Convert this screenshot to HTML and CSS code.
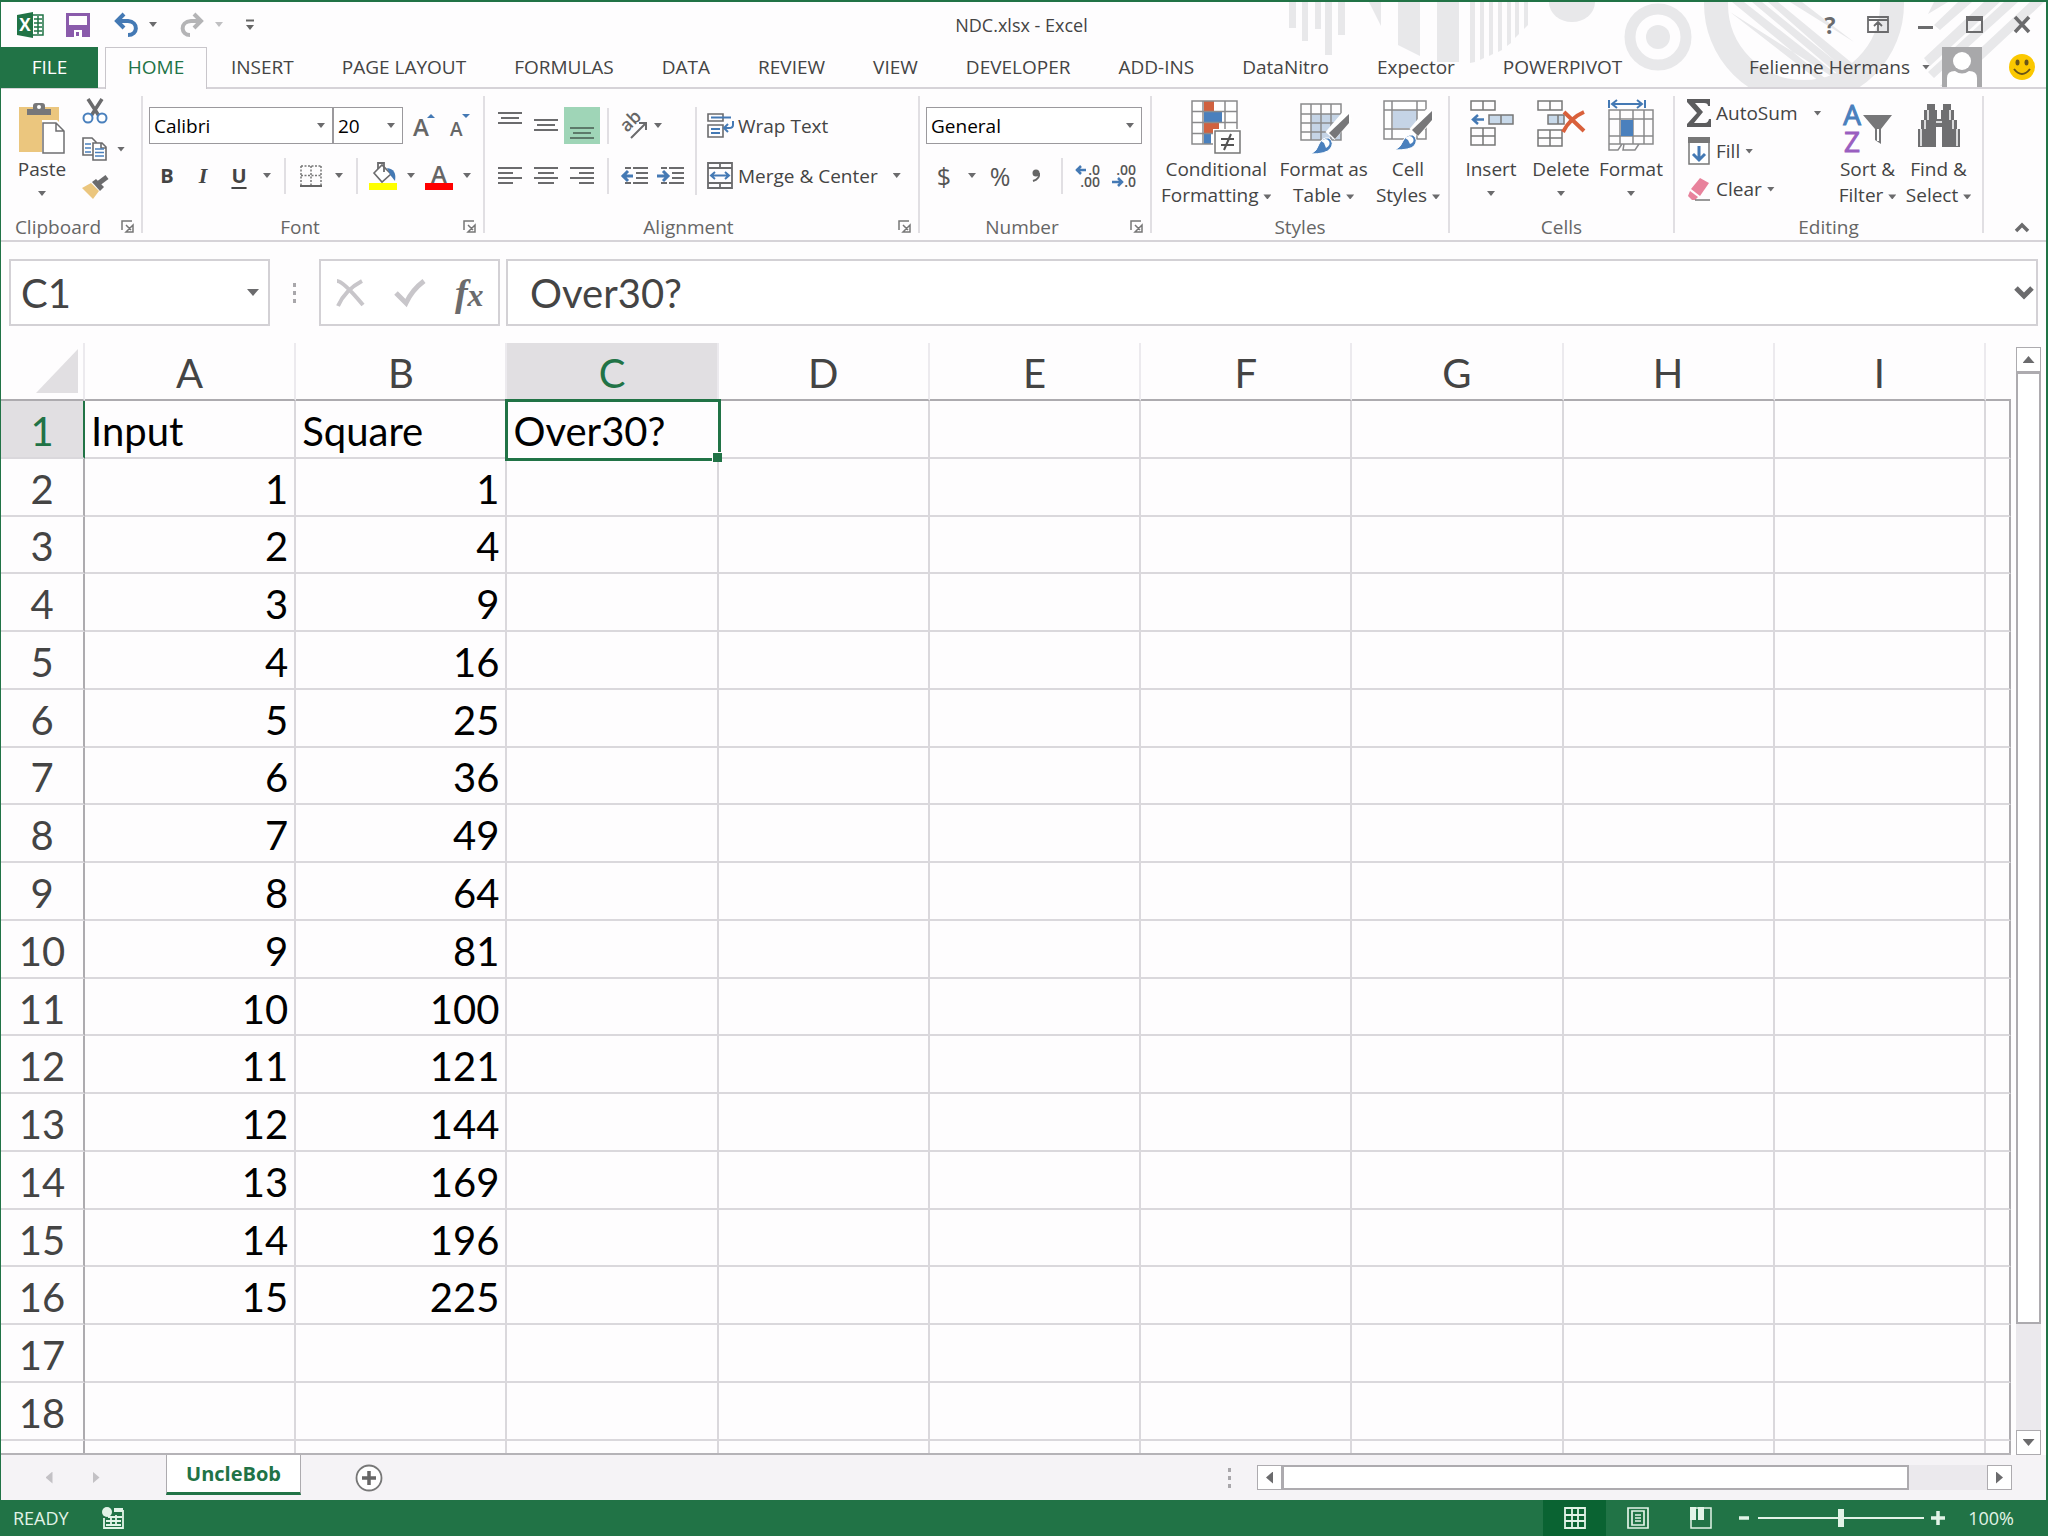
FILE: index.html
```
<!DOCTYPE html>
<html lang="en">
<head>
    <meta charset="UTF-8">
    <meta name="viewport" content="width=device-width, initial-scale=1.0">
    <title>NDC.xlsx - Excel</title>
    <link rel="stylesheet" href="styles.css">
</head>
<body>
<div class="app">
    <header class="top">
        <!-- decoration behind the window buttons -->
        <svg class="circuit" width="768" height="86" viewBox="1278 2 768 86">
            <g fill="#e8e8ea">
                <path d="M1289 2h7v26h-7zM1302 2h6v39h-6zM1315 2h6v27h-6zM1325 2h7v53h-7zM1338 2h7v33h-7zM1369 2h12v24z"/>
                <path d="M1398 2h22v54l-22-11zM1437 2h22v60h-22zM1470 2h5v60l-5 1zM1480 2h4v56l-4 2zM1489 2h4v52l-4 2zM1498 2h4v48l-4 2zM1507 2h4v41l-4 3zM1515 2h4v32l-4 4zM1524 2h4v23l-4 4z"/>
                <path d="M1549 2h46a23 20 0 0 1-46 0z"/>
                <circle cx="1658" cy="37" r="12"/>
                <path d="M1730 12l98 76h22zM1732 2h12l110 86h-17zM1752 2h10l94 76-4 8zM1768 2h10l80 66-6 8zM1790 2h12l52 40z"/>
                <path d="M1934 2h14l-20 12zM1958 2h14l-32 28-6-5zM1984 2h16l-70 64-6-8zM2004 2h14l-84 76-6-6zM2030 2h14l-90 84h-14z"/>
            </g>
            <circle cx="1658" cy="37" r="28" fill="none" stroke="#e8e8ea" stroke-width="11"/>
            <circle cx="1804" cy="4" r="88" fill="none" stroke="#e8e8ea" stroke-width="24"/>
        </svg>

        <div class="titlebar">
            <div class="quick">
                <svg class="q-excel" width="27" height="26" viewBox="0 0 27 26"><path d="M14 3h12v20H14z" fill="#fff" stroke="#217346" stroke-width="1.5"/><path d="M17 7h8M17 11h8M17 15h8M17 19h8M21 4v18" stroke="#217346" stroke-width="1.5"/><path d="M0 3l16-3v26L0 23z" fill="#217346"/><text x="8" y="19" text-anchor="middle" class="logo-x">X</text></svg>
                <button aria-label="Save"><svg width="24" height="24" viewBox="0 0 24 24"><path d="M1.500 1.500h21v21h-21z" fill="none" stroke="#8a5bab" stroke-width="3"/><path d="M2 13h20M4 14h16v8H4z" fill="#8a5bab" stroke="#8a5bab" stroke-width="2"/><path d="M8 17h8v7H8z" fill="#fff"/><path d="M10 19h3v4h-3z" fill="#8a5bab"/></svg></button>
                <button aria-label="Undo"><svg width="24" height="24" viewBox="0 0 24 24"><path d="M2 8h12c11 1 10 14 0 14M10 1L3 8l7 7" fill="none" stroke="#4479b4" stroke-width="4"/></svg></button>
                <i class="caret"></i>
                <button class="q-redo" aria-label="Redo"><svg width="24" height="24" viewBox="0 0 24 24"><path d="M22 8H11C-1 9 1 22 10 22M14 1l7 7-7 7" fill="none" stroke="#b4b4b6" stroke-width="4"/></svg></button>
                <i class="caret pale"></i>
                <button class="q-more" aria-label="Customize"><svg width="10" height="12" viewBox="0 0 10 12"><path d="M1 1.500h8" stroke="#666" stroke-width="2"/><path d="M1 6h8l-4 5z" fill="#666"/></svg></button>
            </div>
            <h1>NDC.xlsx - Excel</h1>
            <div class="window-buttons">
                <button class="help" aria-label="Help">?</button>
                <button aria-label="Ribbon options"><svg width="22" height="17" viewBox="0 0 22 17"><path d="M1 1h20v15H1zM1 4h20M11 15V7M7 10l4-4 4 4" fill="none" stroke="#6b6b6d" stroke-width="1.800"/></svg></button>
                <button aria-label="Minimize"><svg width="16" height="17" viewBox="0 0 16 17"><path d="M0 11.500h15" stroke="#6b6b6d" stroke-width="3"/></svg></button>
                <button aria-label="Maximize"><svg width="17" height="17" viewBox="0 0 17 17"><path d="M1 1h15v15H1z" fill="none" stroke="#6b6b6d" stroke-width="2"/><path d="M0 0h17v5H0z" fill="#6b6b6d"/></svg></button>
                <button aria-label="Close"><svg width="16" height="17" viewBox="0 0 16 17"><path d="M1 1l14 15M15 1L1 16" stroke="#6b6b6d" stroke-width="3.500"/></svg></button>
            </div>
        </div>

        <nav class="tabs">
            <a href="#" class="file">FILE</a>
            <a href="#" class="active">HOME</a>
            <a href="#">INSERT</a>
            <a href="#">PAGE LAYOUT</a>
            <a href="#">FORMULAS</a>
            <a href="#">DATA</a>
            <a href="#">REVIEW</a>
            <a href="#">VIEW</a>
            <a href="#">DEVELOPER</a>
            <a href="#">ADD-INS</a>
            <a href="#">DataNitro</a>
            <a href="#">Expector</a>
            <a href="#">POWERPIVOT</a>
            <button class="user">Felienne Hermans <i class="caret"></i>
                <svg width="40" height="40" viewBox="0 0 40 40"><path d="M0 0h40v40H0z" fill="#a8a8aa"/><circle cx="20" cy="14" r="9" fill="#fff"/><path d="M5 40V31q0-7 8-7q7 5 14 0q8 0 8 7v9z" fill="#fff"/></svg>
            </button>
            <button class="smile" aria-label="Send a smile"><svg width="28" height="28" viewBox="0 0 28 28"><circle cx="14" cy="14" r="13" fill="#fbc800"/><ellipse cx="9.500" cy="9.500" rx="2" ry="3" fill="#6a5518"/><ellipse cx="18.500" cy="9.500" rx="2" ry="3" fill="#6a5518"/><path d="M6 16q8 10 16 0" fill="none" stroke="#6a5518" stroke-width="2"/></svg></button>
        </nav>
    </header>

    <section class="ribbon">
        <div class="group clipboard">
            <div class="body">
                <button class="big paste">
                    <svg width="48" height="52" viewBox="0 0 48 52"><path d="M1 5h40v45H1z" fill="#ebc67e"/><path d="M9 13V7h6V4q0-3 3-3h6q3 0 3 3v3h6v6z" fill="#777779"/><circle cx="21" cy="5" r="2" fill="#fff"/><path d="M24 18h15l9 9v25H24z" fill="#fff"/><path d="M25 21h13l8 8v22H25zM38 21v8h8" fill="#fff" stroke="#6f6f71" stroke-width="1.500"/></svg>
                    <span>Paste</span><i class="caret"></i>
                </button>
                <div class="clip-tools">
                    <button aria-label="Cut"><svg width="26" height="26" viewBox="0 0 26 26"><path d="M6 1l11 17M20 1L9 18" stroke="#6b6b6d" stroke-width="3.500"/><circle cx="6" cy="20" r="4.500" fill="#fff" stroke="#4a80bd" stroke-width="2"/><circle cx="20" cy="20" r="4.500" fill="#fff" stroke="#4a80bd" stroke-width="2"/></svg></button>
                    <button aria-label="Copy"><svg width="26" height="26" viewBox="0 0 26 26"><path d="M1 2h9l4 4v13H1z" fill="#fff" stroke="#6b6b6d" stroke-width="1.600"/><path d="M3 8h6M3 12h6M3 16h6" stroke="#4a80bd" stroke-width="1.600"/><path d="M11 7h9l4 4v13H11zM19 7v5h5" fill="#fff" stroke="#6b6b6d" stroke-width="1.600"/><path d="M13 13h9M13 16.500h9M13 20h9" stroke="#4a80bd" stroke-width="1.600"/></svg></button>
                    <i class="caret"></i>
                    <button aria-label="Format Painter"><svg width="26" height="26" viewBox="0 0 26 26"><path d="M0 14l9-5 8 8-6 8z" fill="#ebc67e"/><path d="M10 8l4-3 8 8-4 4z" fill="#6b6b6d"/><path d="M17 9l8-6" stroke="#6b6b6d" stroke-width="5"/></svg></button>
                </div>
            </div>
            <div class="caption">Clipboard</div>
            <button class="launcher" aria-label="Clipboard settings"><svg width="13" height="13" viewBox="0 0 13 13"><path d="M1 10V1h10M5 5l5 5M12 5v7H5z" fill="none" stroke="#777" stroke-width="1.500"/></svg></button>
        </div>

        <div class="group font">
            <div class="body rows">
                <div class="row">
                    <span class="combo face"><select aria-label="Font"><option>Calibri</option></select><i class="caret"></i></span>
                    <span class="combo size"><select aria-label="Font size"><option>20</option></select><i class="caret"></i></span>
                    <button class="tool" aria-label="Increase font size"><svg width="24" height="26" viewBox="0 0 24 26"><text x="0" y="23" class="grow">A</text><path d="M14 5h8l-4-4z" fill="#4479b4"/></svg></button>
                    <button class="tool" aria-label="Decrease font size"><svg width="24" height="26" viewBox="0 0 24 26"><text x="1" y="23" class="shrink">A</text><path d="M13 1h8l-4 4z" fill="#4479b4"/></svg></button>
                </div>
                <div class="row">
                    <button class="tool bold">B</button>
                    <button class="tool italic">I</button>
                    <button class="tool under">U</button>
                    <button class="drop" aria-label="Underline styles"><i class="caret"></i></button>
                    <i class="sep"></i>
                    <button class="tool" aria-label="Borders"><svg width="22" height="22" viewBox="0 0 22 22"><path d="M1 1h20M1 1v19M21 1v19M11 1v19M1 10.500h20" stroke="#777" stroke-width="1.500" stroke-dasharray="2 1.500"/><path d="M0 21h22" stroke="#666" stroke-width="2"/></svg></button>
                    <button class="drop" aria-label="Border styles"><i class="caret"></i></button>
                    <i class="sep"></i>
                    <button class="tool" aria-label="Fill color"><svg width="28" height="28" viewBox="0 0 28 28"><path d="M5 11l8-8 9 9-9 8z" fill="#fff" stroke="#6b6b6d" stroke-width="1.600"/><path d="M9 7V1h6v9" fill="none" stroke="#6b6b6d" stroke-width="1.800"/><path d="M18 6q10 1 8 13l-4-5z" fill="#4479b4"/><path d="M0 21h28v7H0z" fill="#ff0"/></svg></button>
                    <button class="drop" aria-label="Fill colors"><i class="caret"></i></button>
                    <button class="tool" aria-label="Font color"><svg width="28" height="28" viewBox="0 0 28 28"><text x="14" y="21" text-anchor="middle" class="grow">A</text><path d="M0 21h28v7H0z" fill="#f00"/></svg></button>
                    <button class="drop" aria-label="Font colors"><i class="caret"></i></button>
                </div>
            </div>
            <div class="caption">Font</div>
            <button class="launcher" aria-label="Font settings"><svg width="13" height="13" viewBox="0 0 13 13"><path d="M1 10V1h10M5 5l5 5M12 5v7H5z" fill="none" stroke="#777" stroke-width="1.500"/></svg></button>
        </div>

        <div class="group align">
            <div class="body">
                <div class="rows">
                    <div class="row">
                        <button class="tool" aria-label="Top Align"><svg width="24" height="36" viewBox="0 0 24 36"><path d="M0 5h24M3 10h18M0 15h24" stroke="#6b6b6d" stroke-width="2"/></svg></button>
                        <button class="tool" aria-label="Middle Align"><svg width="24" height="36" viewBox="0 0 24 36"><path d="M0 12h24M3 17h18M0 22h24" stroke="#6b6b6d" stroke-width="2"/></svg></button>
                        <button class="tool on" aria-label="Bottom Align"><svg width="24" height="36" viewBox="0 0 24 36"><path d="M0 20h24M3 25h18M0 30h24" stroke="#5d7a6a" stroke-width="2"/></svg></button>
                        <i class="sep"></i>
                        <button class="tool" aria-label="Orientation"><svg width="28" height="28" viewBox="0 0 28 28"><text x="0" y="0" class="ab" transform="translate(7 21) rotate(-45)">ab</text><path d="M11 26L26 11M19 11h7v7" fill="none" stroke="#6b6b6d" stroke-width="2"/></svg></button>
                        <button class="drop" aria-label="Orientations"><i class="caret"></i></button>
                    </div>
                    <div class="row">
                        <button class="tool" aria-label="Align Left"><svg width="24" height="20" viewBox="0 0 24 20"><path d="M0 2h24M0 7h15M0 12h24M0 17h15" stroke="#6b6b6d" stroke-width="2"/></svg></button>
                        <button class="tool" aria-label="Center"><svg width="24" height="20" viewBox="0 0 24 20"><path d="M0 2h24M4 7h16M0 12h24M4 17h16" stroke="#6b6b6d" stroke-width="2"/></svg></button>
                        <button class="tool" aria-label="Align Right"><svg width="24" height="20" viewBox="0 0 24 20"><path d="M0 2h24M9 7h15M0 12h24M9 17h15" stroke="#6b6b6d" stroke-width="2"/></svg></button>
                        <i class="sep"></i>
                        <button class="tool" aria-label="Decrease Indent"><svg width="27" height="20" viewBox="0 0 27 20"><path d="M4 2h6M12 2h15M15 7h12M15 12h12M4 17h6M12 17h15" stroke="#6b6b6d" stroke-width="2"/><path d="M1 10h11M7 5l-5 5 5 5" fill="none" stroke="#4479b4" stroke-width="3"/></svg></button>
                        <button class="tool" aria-label="Increase Indent"><svg width="27" height="20" viewBox="0 0 27 20"><path d="M4 2h6M12 2h15M15 7h12M15 12h12M4 17h6M12 17h15" stroke="#6b6b6d" stroke-width="2"/><path d="M0 10h11M6 5l5 5-5 5" fill="none" stroke="#4479b4" stroke-width="3"/></svg></button>
                    </div>
                </div>
                <i class="sep tall"></i>
                <div class="rows">
                    <button class="wide"><svg width="27" height="27" viewBox="0 0 27 27"><path d="M1 2h15v7H1zM1 13h15v12H1z" fill="none" stroke="#6b6b6d" stroke-width="1.600"/><path d="M4 5.500h20M4 17h9M4 21h9M26 9v4q0 3-4 3h-5M21 12l-4 4 4 4" fill="none" stroke="#4479b4" stroke-width="2"/></svg>Wrap Text</button>
                    <button class="wide"><svg width="27" height="27" viewBox="0 0 27 27"><path d="M1 1h24v25H1zM1 6h24M1 21h24M13 1v5M13 21v5" fill="none" stroke="#6b6b6d" stroke-width="1.800"/><path d="M4 13.500h18M8 10l-4 3.500 4 3.500M18 10l4 3.500-4 3.500" fill="none" stroke="#4479b4" stroke-width="2"/></svg>Merge &amp; Center <i class="caret far"></i></button>
                </div>
            </div>
            <div class="caption">Alignment</div>
            <button class="launcher" aria-label="Alignment settings"><svg width="13" height="13" viewBox="0 0 13 13"><path d="M1 10V1h10M5 5l5 5M12 5v7H5z" fill="none" stroke="#777" stroke-width="1.500"/></svg></button>
        </div>

        <div class="group number">
            <div class="body rows">
                <div class="row">
                    <span class="combo format"><select aria-label="Number format"><option>General</option></select><i class="caret"></i></span>
                </div>
                <div class="row">
                    <button class="tool sign">$</button>
                    <button class="drop" aria-label="Currencies"><i class="caret"></i></button>
                    <button class="tool sign">%</button>
                    <button class="tool" aria-label="Comma Style"><svg width="10" height="14" viewBox="0 0 10 14"><circle cx="5" cy="4" r="3.500" fill="#666"/><path d="M8 4q1 6-6 8" fill="none" stroke="#666" stroke-width="2"/></svg></button>
                    <i class="sep"></i>
                    <button class="tool" aria-label="Increase Decimal"><svg width="26" height="26" viewBox="0 0 26 26"><text x="25" y="12" text-anchor="end" class="dec">.0</text><text x="25" y="24" text-anchor="end" class="dec">.00</text><path d="M1 7h10M6 3L2 7l4 4" fill="none" stroke="#4479b4" stroke-width="2.500"/></svg></button>
                    <button class="tool" aria-label="Decrease Decimal"><svg width="26" height="26" viewBox="0 0 26 26"><text x="25" y="12" text-anchor="end" class="dec">.00</text><text x="25" y="24" text-anchor="end" class="dec">.0</text><path d="M1 19h10M7 15l4 4-4 4" fill="none" stroke="#4479b4" stroke-width="2.500"/></svg></button>
                </div>
            </div>
            <div class="caption">Number</div>
            <button class="launcher" aria-label="Number settings"><svg width="13" height="13" viewBox="0 0 13 13"><path d="M1 10V1h10M5 5l5 5M12 5v7H5z" fill="none" stroke="#777" stroke-width="1.500"/></svg></button>
        </div>

        <div class="group styles">
            <div class="body">
                <button class="big">
                    <svg width="50" height="54" viewBox="0 0 50 54"><path d="M1 1h45v43H1z" fill="#fff"/><path d="M13 1h10v10H13zM13 23h15v10H13z" fill="#d0613f"/><path d="M13 12h18v10H13zM13 34h7v10h-7z" fill="#4a80bd"/><path d="M1 1h45v43H1zM12 1v43M34 1v43M1 11.500h45M1 22.500h45M1 33.500h45" fill="none" stroke="#8a8a8c" stroke-width="1.500"/><path d="M22 29h28v25H22z" fill="#fff"/><path d="M24 31h25v22H24z" fill="#fff" stroke="#777" stroke-width="1.500"/><path d="M30 39h13M30 45h13M40 34l-7 16" stroke="#555" stroke-width="2"/></svg>
                    <span>Conditional<br>Formatting <i class="caret"></i></span>
                </button>
                <button class="big">
                    <svg width="50" height="54" viewBox="0 0 50 54"><path d="M12 14h30v26H12z" fill="#c5d4e6"/><path d="M2 4h40v36H2zM12 4v36M22 4v36M32 4v36M2 14h40M2 23h40M2 32h40" fill="none" stroke="#8a8a8c" stroke-width="1.500"/><path d="M49 15L31 36" stroke="#fff" stroke-width="12"/><path d="M50 14v9L36 39l-6-6z" fill="#777779"/><path d="M12 54q6-3 8-10 3-7 10-6 6 5 1 11-4 5-19 5z" fill="#4a80bd" stroke="#fff"/><path d="M22 41q5-4 8 0 2 4-3 7l-2-5z" fill="#fff"/></svg>
                    <span>Format as<br>Table <i class="caret"></i></span>
                </button>
                <button class="big">
                    <svg width="50" height="54" viewBox="0 0 50 54"><path d="M1 1h42v38H1z" fill="#fff"/><path d="M10 10h24v18H10z" fill="#c5d4e6"/><path d="M1 1h42v38H1zM9 1v38M34 1v38M1 10h42M1 29h42" fill="none" stroke="#8a8a8c" stroke-width="1.500"/><path d="M48 13L31 33" stroke="#fff" stroke-width="12"/><path d="M49 11v9L35 36l-6-6z" fill="#777779"/><path d="M12 50q6-3 8-9 3-7 10-6 6 5 1 11-4 4-19 4z" fill="#4a80bd" stroke="#fff"/><path d="M22 38q5-4 8 0 2 4-3 6l-2-4z" fill="#fff"/></svg>
                    <span>Cell<br>Styles <i class="caret"></i></span>
                </button>
            </div>
            <div class="caption">Styles</div>
        </div>

        <div class="group cells">
            <div class="body">
                <button class="big">
                    <svg width="48" height="54" viewBox="0 0 48 54"><path d="M4 1h24v9H4zM16 1v9M4 28h24v17H4zM16 28v17M4 36h24" fill="none" stroke="#777" stroke-width="1.500"/><path d="M22 15h24v9H22zM34 15v9" fill="#c8d9ea" stroke="#777" stroke-width="1.500"/><path d="M6 19.500h11M11 15l-5 4.500 5 4.500" fill="none" stroke="#4479b4" stroke-width="2.500"/></svg>
                    <span>Insert</span><i class="caret"></i>
                </button>
                <button class="big">
                    <svg width="50" height="54" viewBox="0 0 50 54"><path d="M2 1h24v9H2zM14 1v9M2 30h24v16H2zM14 30v16M2 38h24" fill="none" stroke="#777" stroke-width="1.500"/><path d="M12 15h16v9H12zM22 15v9" fill="#c8d9ea" stroke="#777" stroke-width="1.500"/><path d="M28 12l20 19M48 12Q34 18 27 32" fill="none" stroke="#d9603b" stroke-width="4"/></svg>
                    <span>Delete</span><i class="caret"></i>
                </button>
                <button class="big">
                    <svg width="48" height="54" viewBox="0 0 48 54"><path d="M2 0v8M38 0v8M6 4h28M10 0L5 4l5 4M30 0l5 4-5 4" fill="none" stroke="#4479b4" stroke-width="2"/><path d="M2 10h44v34H2zM13 10v34M26 10v34M37 10v34M2 19h44M2 36h44M2 44v6h9l4-6M17 44l-1 6h12l4-6" fill="none" stroke="#8a8a8c" stroke-width="1.500"/><path d="M14 20h12v16H14z" fill="#4a80bd"/></svg>
                    <span>Format</span><i class="caret"></i>
                </button>
            </div>
            <div class="caption">Cells</div>
        </div>

        <div class="group editing">
            <div class="body">
                <div class="edit-list">
                    <button class="wide"><svg width="24" height="28" viewBox="0 0 24 28"><path d="M0 0h23v7h-2q0-3-4-3H8l8 9-9 11h11q3 0 4-4h2v8H0v-3l10-11L0 3z" fill="#5c5c5e"/></svg>AutoSum <i class="caret far"></i></button>
                    <button class="wide"><svg width="24" height="30" viewBox="0 0 24 30"><path d="M2 2h20v26H2z" fill="#fff" stroke="#777" stroke-width="1.500"/><path d="M1 1h22v6H1z" fill="#777"/><path d="M12 10v14M6 18l6 6 6-6" fill="none" stroke="#4479b4" stroke-width="3"/></svg>Fill <i class="caret"></i></button>
                    <button class="wide"><svg width="24" height="26" viewBox="0 0 24 26"><path d="M13 2l9 5-9 13-9-7z" fill="#e8829c"/><path d="M3 15l8 6-3 3H5l-4-4z" fill="#e8829c"/><path d="M8 24h15" stroke="#777" stroke-width="1.500"/></svg>Clear <i class="caret"></i></button>
                </div>
                <button class="big">
                    <svg width="48" height="54" viewBox="0 0 48 54"><text x="8" y="25" text-anchor="middle" class="sort-a">A</text><text x="8" y="52" text-anchor="middle" class="sort-z">Z</text><path d="M19 15h29L37 29v15l-6-4V29z" fill="#777779"/><path d="M34 29v12" stroke="#fff" stroke-width="2"/></svg>
                    <span>Sort &amp;<br>Filter <i class="caret"></i></span>
                </button>
                <button class="big">
                    <svg width="46" height="54" viewBox="0 0 46 54"><path d="M11 4h8v6h2v9h4v-9h2V4h8v6h3v10h3v9h3v18H26V27h-6v20H2V29h3V20h3V10h3z" fill="#6f6f71"/><path d="M5 29v17M9 20v9M12 10v10M41 29v17M37 20v9M34 10v10M20 22h6" stroke="#fff" stroke-width="1.500"/></svg>
                    <span>Find &amp;<br>Select <i class="caret"></i></span>
                </button>
            </div>
            <div class="caption">Editing</div>
        </div>
        <button class="collapse" aria-label="Collapse the ribbon"><svg width="16" height="12" viewBox="0 0 16 12"><path d="M2 10l6-6 6 6" fill="none" stroke="#6b6b6d" stroke-width="3.500"/></svg></button>
    </section>

    <section class="formula-bar">
        <div class="name-box"><input type="text" value="C1" aria-label="Name box"><i class="caret large"></i></div>
        <i class="dots"></i>
        <div class="fx">
            <button aria-label="Cancel"><svg width="30" height="30" viewBox="0 0 30 30"><path d="M2 3q6 0 26 24M27 3Q10 12 3 28" fill="none" stroke="#c8c6ca" stroke-width="4"/></svg></button>
            <button aria-label="Enter"><svg width="32" height="30" viewBox="0 0 32 30"><path d="M2 15l10 10Q18 12 30 3" fill="none" stroke="#c8c6ca" stroke-width="5"/></svg></button>
            <button class="fx-label" aria-label="Insert Function">f<span>x</span></button>
        </div>
        <div class="formula"><input type="text" value="Over30?" aria-label="Formula"><svg width="20" height="14" viewBox="0 0 20 14"><path d="M2 2l8 8 8-8" fill="none" stroke="#6b6b6d" stroke-width="5"/></svg></div>
    </section>

    <main class="sheet-area">
        <div class="sheet">
            <table>
                <colgroup><col class="c-head"><col><col><col><col><col><col><col><col><col><col class="c-last"></colgroup>
                <thead>
                    <tr><th class="corner"><svg width="42" height="44" viewBox="0 0 42 44"><path d="M42 0v44H0z" fill="#e1dfe2"/></svg></th><th>A</th><th>B</th><th class="current">C</th><th>D</th><th>E</th><th>F</th><th>G</th><th>H</th><th>I</th><th></th></tr>
                </thead>
                <tbody>
                    <tr><th class="current">1</th><td class="text">Input</td><td class="text">Square</td><td class="text selected">Over30?</td><td></td><td></td><td></td><td></td><td></td><td></td><td></td></tr>
                    <tr><th>2</th><td>1</td><td>1</td><td></td><td></td><td></td><td></td><td></td><td></td><td></td><td></td></tr>
                    <tr><th>3</th><td>2</td><td>4</td><td></td><td></td><td></td><td></td><td></td><td></td><td></td><td></td></tr>
                    <tr><th>4</th><td>3</td><td>9</td><td></td><td></td><td></td><td></td><td></td><td></td><td></td><td></td></tr>
                    <tr><th>5</th><td>4</td><td>16</td><td></td><td></td><td></td><td></td><td></td><td></td><td></td><td></td></tr>
                    <tr><th>6</th><td>5</td><td>25</td><td></td><td></td><td></td><td></td><td></td><td></td><td></td><td></td></tr>
                    <tr><th>7</th><td>6</td><td>36</td><td></td><td></td><td></td><td></td><td></td><td></td><td></td><td></td></tr>
                    <tr><th>8</th><td>7</td><td>49</td><td></td><td></td><td></td><td></td><td></td><td></td><td></td><td></td></tr>
                    <tr><th>9</th><td>8</td><td>64</td><td></td><td></td><td></td><td></td><td></td><td></td><td></td><td></td></tr>
                    <tr><th>10</th><td>9</td><td>81</td><td></td><td></td><td></td><td></td><td></td><td></td><td></td><td></td></tr>
                    <tr><th>11</th><td>10</td><td>100</td><td></td><td></td><td></td><td></td><td></td><td></td><td></td><td></td></tr>
                    <tr><th>12</th><td>11</td><td>121</td><td></td><td></td><td></td><td></td><td></td><td></td><td></td><td></td></tr>
                    <tr><th>13</th><td>12</td><td>144</td><td></td><td></td><td></td><td></td><td></td><td></td><td></td><td></td></tr>
                    <tr><th>14</th><td>13</td><td>169</td><td></td><td></td><td></td><td></td><td></td><td></td><td></td><td></td></tr>
                    <tr><th>15</th><td>14</td><td>196</td><td></td><td></td><td></td><td></td><td></td><td></td><td></td><td></td></tr>
                    <tr><th>16</th><td>15</td><td>225</td><td></td><td></td><td></td><td></td><td></td><td></td><td></td><td></td></tr>
                    <tr><th>17</th><td></td><td></td><td></td><td></td><td></td><td></td><td></td><td></td><td></td><td></td></tr>
                    <tr><th>18</th><td></td><td></td><td></td><td></td><td></td><td></td><td></td><td></td><td></td><td></td></tr>
                    <tr class="cut"><th></th><td></td><td></td><td></td><td></td><td></td><td></td><td></td><td></td><td></td><td></td></tr>
                </tbody>
            </table>
        </div>
        <div class="vscroll">
            <button aria-label="Scroll up"><i class="arrow up"></i></button>
            <div class="track"><div class="thumb"></div></div>
            <button aria-label="Scroll down"><i class="arrow down"></i></button>
        </div>
    </main>

    <div class="sheet-tabs">
        <div class="tab-nav">
            <button aria-label="Previous sheet"><i class="arrow left pale"></i></button>
            <button aria-label="Next sheet"><i class="arrow right pale"></i></button>
        </div>
        <button class="sheet-tab">UncleBob</button>
        <button class="add" aria-label="New sheet"><svg width="28" height="28" viewBox="0 0 28 28"><circle cx="14" cy="14" r="12.500" fill="#fff" stroke="#777" stroke-width="1.800"/><path d="M14 7v14M7 14h14" stroke="#666" stroke-width="3.500"/></svg></button>
        <i class="dots"></i>
        <div class="hscroll">
            <button aria-label="Scroll left"><i class="arrow left"></i></button>
            <div class="track"><div class="thumb"></div></div>
            <button aria-label="Scroll right"><i class="arrow right"></i></button>
        </div>
    </div>

    <footer class="status">
        <span>READY</span>
        <button class="macro" aria-label="Record macro"><svg width="22" height="22" viewBox="0 0 22 22"><circle cx="5" cy="5" r="5" fill="#e2f3e7"/><path d="M12 1h9v4h-9z" fill="#e2f3e7"/><path d="M2 11v10h19V3M6 10h14M4 14h15M4 18h15M9 10v9M14 8v11" fill="none" stroke="#e2f3e7" stroke-width="1.800"/></svg></button>
        <div class="views">
            <button class="on" aria-label="Normal"><svg width="22" height="22" viewBox="0 0 22 22"><path d="M1 1h20v20H1zM8 1v20M14 1v20M1 8h20M1 14h20" fill="none" stroke="#e2f3e7" stroke-width="1.800"/></svg></button>
            <button aria-label="Page Layout"><svg width="22" height="22" viewBox="0 0 22 22"><path d="M1 1h20v20H1zM5 4h12v14H5zM8 8h6M8 11h6M8 14h6" fill="none" stroke="#e2f3e7" stroke-width="1.700"/></svg></button>
            <button aria-label="Page Break Preview"><svg width="22" height="22" viewBox="0 0 22 22"><path d="M1 1h20v20H1z" fill="none" stroke="#e2f3e7" stroke-width="1.500"/><path d="M0 0h6v13H0zM8 0h6v13H8z" fill="#e2f3e7"/></svg></button>
        </div>
        <button class="zoom-btn" aria-label="Zoom out"><svg width="14" height="14" viewBox="0 0 14 14"><path d="M2 7h10" stroke="#e2f3e7" stroke-width="3.500"/></svg></button>
        <input type="range" min="0" max="100" value="50" aria-label="Zoom">
        <button class="zoom-btn" aria-label="Zoom in"><svg width="14" height="14" viewBox="0 0 14 14"><path d="M0 7h14M7 0v14" stroke="#e2f3e7" stroke-width="3.500"/></svg></button>
        <span class="percent">100%</span>
    </footer>
</div>
</body>
</html>
```
FILE: styles.css
```
/* Global Styles */
* {
    box-sizing: border-box;
}

body {
    margin: 0;
    font-family: "Open Sans", "Noto Sans", sans-serif;
    font-size: 19px;
    color: #444;
    background-color: #fefdfe;
}

button,
input,
select {
    font: inherit;
    color: inherit;
    margin: 0;
    padding: 0;
    border: none;
    background: none;
}

button {
    display: flex;
    align-items: center;
    justify-content: center;
}

svg {
    display: block;
    flex: none;
}

button svg {
    overflow: visible;
}

.app {
    display: flex;
    flex-direction: column;
    height: 100vh;
    border: 2px solid #217346;
    border-left-width: 1px;
    border-bottom: none;
}

.caret {
    display: inline-block;
    flex: none;
    width: 8px;
    height: 5px;
    background-color: #6b6b6d;
    clip-path: polygon(0 0, 100% 0, 50% 100%);
    vertical-align: middle;
}

.caret.large {
    width: 12px;
    height: 7px;
}

.caret.pale {
    background-color: #c0c0c2;
}

/* Title bar */
.top {
    position: relative;
}

.circuit {
    position: absolute;
    top: 0;
    right: 0;
    z-index: -1;
}

.titlebar {
    display: grid;
    grid-template-columns: 1fr auto 1fr;
    align-items: center;
    height: 45px;
}

.titlebar h1 {
    margin: 0;
    padding-right: 4px;
    font-size: 18px;
    font-weight: normal;
}

.quick {
    display: flex;
    align-items: center;
    padding-left: 16px;
}

.q-excel {
    margin-right: 22px;
}

.quick button {
    margin-right: 24px;
}

.quick button + .caret {
    margin-left: -13px;
}

.quick .q-redo {
    margin-left: 23px;
}

.quick .q-more {
    margin-left: 22px;
}

.logo-x {
    font: bold 17px "Open Sans", sans-serif;
    fill: #fff;
}

.window-buttons {
    display: flex;
    justify-content: flex-end;
}

.window-buttons button {
    width: 48px;
    height: 40px;
}

.help {
    font-size: 23px;
    font-weight: bold;
    color: #6b6b6d;
}

/* Ribbon tabs */
.tabs {
    display: flex;
    height: 42px;
    border-bottom: 2px solid #d6d3d8;
}

.tabs a {
    padding: 0 24px;
    line-height: 41px;
    color: #444;
    text-decoration: none;
    white-space: nowrap;
}

.tabs .file {
    width: 97px;
    margin-right: 7px;
    padding: 0;
    height: 41px;
    text-align: center;
    color: #fff;
    background-color: #217346;
}

.tabs .active {
    width: 102px;
    height: 42px;
    padding: 0;
    text-align: center;
    line-height: 39px;
    color: #217346;
    background-color: #fefdfe;
    border: 1px solid #c9c6cb;
    border-bottom: none;
}

.user {
    gap: 16px;
    height: 40px;
    margin-left: auto;
    font-size: 19px;
    white-space: nowrap;
}

.user .caret {
    margin-left: -4px;
}

.user svg {
    margin-left: -4px;
}

.smile {
    width: 48px;
    margin-left: 16px;
}

/* Ribbon */
.ribbon {
    display: flex;
    height: 153px;
    border-bottom: 2px solid #d6d3d8;
}

.group {
    position: relative;
    display: flex;
    flex-direction: column;
    flex: none;
    margin: 7px 0;
    border-right: 2px solid #e1dfe3;
}

.body {
    display: flex;
    flex: 1;
    padding-top: 11px;
}

.rows {
    display: flex;
    flex-direction: column;
    gap: 13px;
}

.row {
    display: flex;
    align-items: center;
    height: 37px;
}

.caption {
    height: 18px;
    line-height: 24px;
    text-align: center;
    color: #666;
}

.launcher {
    position: absolute;
    right: 7px;
    bottom: 0;
}

.clipboard { width: 142px; }
.font { width: 342px; }
.align { width: 435px; }
.number { width: 232px; }
.styles { width: 298px; }
.cells { width: 225px; }
.editing { width: 309px; }

.clipboard .caption,
.font .caption,
.align .caption,
.number .caption {
    padding-right: 26px;
}

.tool {
    width: 36px;
    height: 37px;
}

.tool.on {
    background-color: #9fd5b7;
}

.drop {
    width: 20px;
    height: 37px;
}

.sep {
    width: 2px;
    height: 36px;
    margin: 0 7px;
    background-color: #e1dfe3;
}

.sep.tall {
    height: 88px;
}

.big {
    flex-direction: column;
    justify-content: flex-start;
    line-height: 26px;
    white-space: nowrap;
}

.big svg {
    margin-bottom: 2px;
}

.big > .caret {
    margin-top: 9px;
}

.clipboard .body {
    padding-top: 6px;
}

.styles .body,
.cells .body,
.editing .body {
    padding-top: 4px;
}

.paste {
    width: 64px;
    margin-left: 9px;
}

.clip-tools {
    display: grid;
    grid-template-columns: 36px 14px;
    grid-template-rows: 26px 26px 26px;
    row-gap: 12px;
    align-items: center;
    margin-top: -4px;
    margin-left: 3px;
}

.clip-tools button:first-child {
    grid-column: 1 / 3;
    width: 36px;
}

.clip-tools .caret {
    margin-left: 4px;
}

.combo {
    position: relative;
    height: 37px;
}

.combo select {
    width: 100%;
    height: 100%;
    padding-left: 4px;
    color: #000;
    background-color: #fff;
    border: 1px solid #9b999d;
    border-radius: 0;
    appearance: none;
}

.combo .caret {
    position: absolute;
    top: 16px;
    right: 8px;
}

.font .body,
.number .body {
    padding-left: 6px;
}

.face {
    width: 184px;
}

.size {
    width: 70px;
    margin-right: 4px;
}

.format {
    width: 216px;
}

.bold {
    font-weight: bold;
    font-size: 20px;
}

.italic {
    font-family: "Liberation Serif", serif;
    font-size: 22px;
    font-style: italic;
    font-weight: bold;
}

.under {
    font-size: 20px;
    font-weight: bold;
    text-decoration: underline;
    text-underline-offset: 4px;
    text-decoration-thickness: 2px;
}

.grow {
    font: 600 24px "Open Sans", sans-serif;
    fill: #666;
}

.shrink {
    font: 600 19px "Open Sans", sans-serif;
    fill: #666;
}

.ab {
    font: 600 18px "Open Sans", sans-serif;
    fill: #666;
}

.sign {
    font-size: 25px;
    color: #555;
}

.dec {
    font: 600 14px "Open Sans", sans-serif;
    fill: #555;
}

.align .body {
    padding-left: 7px;
}

.align .drop {
    margin-left: -4px;
}

.wide {
    justify-content: flex-start;
    height: 37px;
    gap: 5px;
    white-space: nowrap;
}

.wide .far {
    margin-left: 11px;
}

.align .wide {
    gap: 4px;
    margin-left: 3px;
}

.styles .body {
    gap: 8px;
    padding-left: 9px;
}

.cells .body {
    padding-left: 6px;
}

.cells .big {
    width: 70px;
}

.edit-list {
    width: 145px;
    margin-top: -6px;
    margin-left: 12px;
}

.edit-list .wide {
    height: 38px;
}

.editing .big {
    width: 71px;
}

.sort-a {
    font: 28px "Open Sans", sans-serif;
    fill: #4a80bd;
    stroke: #4a80bd;
}

.sort-z {
    font: 28px "Open Sans", sans-serif;
    fill: #9a5fc0;
    stroke: #9a5fc0;
}

.collapse {
    align-self: flex-end;
    width: 48px;
    height: 26px;
    margin-left: auto;
}

/* Formula bar */
.formula-bar {
    display: flex;
    align-items: center;
    height: 101px;
    padding: 0 8px;
    font-family: Lato, "Open Sans", sans-serif;
    font-size: 40px;
}

.name-box,
.fx,
.formula {
    display: flex;
    align-items: center;
    height: 67px;
    border: 2px solid #d3d1d5;
    background-color: #fff;
}

.name-box {
    width: 261px;
    padding: 0 9px 0 10px;
}

.name-box input {
    flex: 1;
    min-width: 0;
}

.dots {
    flex: none;
    width: 3px;
    height: 20px;
    background: repeating-linear-gradient(#a9a7ab 0 4px, transparent 4px 8px);
}

.formula-bar .dots {
    margin: 0 23px;
}

.fx {
    width: 181px;
    justify-content: space-around;
    margin-right: 6px;
}

.fx-label {
    font: italic bold 38px "Liberation Serif", serif;
    color: #6b6b6d;
    align-items: baseline;
}

.fx-label span {
    font-size: 32px;
}

.formula {
    flex: 1;
    padding: 0 2px 0 22px;
}

.formula input {
    flex: 1;
    min-width: 0;
}

/* Worksheet grid */
.sheet-area {
    display: flex;
    flex: 1;
    min-height: 0;
}

.sheet {
    flex: 1;
    overflow: hidden;
}

table {
    width: 100%;
    height: 100%;
    table-layout: fixed;
    border-collapse: separate;
    border-spacing: 0;
    border-bottom: 2px solid #b5b3b7;
    font-family: Lato, "Open Sans", sans-serif;
    font-size: 40px;
    line-height: 46px;
}

.c-head {
    width: 84px;
}

.c-last {
    width: 25px;
}

thead tr {
    height: 58px;
}

th,
td {
    padding: 4px 6px 0;
    border-right: 2px solid #dad8dc;
    border-bottom: 2px solid #dad8dc;
}

th {
    font-weight: normal;
    padding: 4px 0 0;
}

td {
    text-align: right;
    color: #000;
}

td.text {
    text-align: left;
}

thead th {
    border-bottom-color: #adabaf;
    border-right-color: #eceaee;
}

thead th:last-child {
    border-right: none;
}

tbody th {
    border-right-color: #adabaf;
}

tbody td:last-child {
    padding: 0;
    border-right-color: #adabaf;
}

th.current {
    color: #217346;
    background-color: #e1dfe2;
}

tbody th.current {
    border-right-color: #217346;
}

.corner {
    vertical-align: bottom;
}

.corner svg {
    margin: 0 5px 6px auto;
}

.selected {
    position: relative;
    outline: 3px solid #217346;
    outline-offset: -1px;
    border-color: #fff;
}

.selected::after {
    content: "";
    position: absolute;
    right: -5px;
    bottom: -5px;
    width: 9px;
    height: 9px;
    background-color: #217346;
    border: 1px solid #fff;
    border-width: 1px 0 0 1px;
}

.cut {
    height: 12px;
}

.cut th,
.cut td {
    padding: 0;
    border-bottom: none;
}

/* Scroll bars */
.vscroll {
    display: flex;
    flex-direction: column;
    width: 25px;
    margin: 4px 5px 0 5px;
}

.vscroll button,
.hscroll button {
    flex: none;
    width: 25px;
    height: 25px;
    background-color: #fff;
    border: 1px solid #adabaf;
}

.track {
    flex: 1;
    background-color: #ebe9ed;
}

.thumb {
    background-color: #fff;
    border: 2px solid #adabaf;
}

.vscroll .thumb {
    height: 90%;
}

.arrow {
    width: 12px;
    height: 12px;
    background-color: #6b6b6d;
}

.arrow.up { height: 7px; clip-path: polygon(50% 0, 100% 100%, 0 100%); }
.arrow.down { height: 7px; clip-path: polygon(0 0, 100% 0, 50% 100%); }
.arrow.left { width: 7px; clip-path: polygon(0 50%, 100% 0, 100% 100%); }
.arrow.right { width: 7px; clip-path: polygon(0 0, 100% 50%, 0 100%); }
.arrow.pale { background-color: #c3c1c5; }

/* Sheet tabs */
.sheet-tabs {
    display: flex;
    align-items: center;
    height: 45px;
    padding-right: 34px;
    background-color: #f5f3f6;
}

.tab-nav {
    display: flex;
    justify-content: center;
    gap: 40px;
    width: 165px;
    padding-right: 22px;
}

.sheet-tab {
    align-self: flex-start;
    width: 135px;
    height: 40px;
    font-size: 20px;
    font-weight: bold;
    color: #217346;
    background-color: #fff;
    border: 1px solid #adabaf;
    border-top: none;
    border-bottom: 3px solid #217346;
}

.add {
    margin-left: 54px;
}

.sheet-tabs .dots {
    margin-left: auto;
    margin-right: 26px;
}

.hscroll {
    display: flex;
    width: 755px;
}

.hscroll .thumb {
    width: 89%;
    height: 25px;
}

/* Status bar */
.status {
    display: flex;
    align-items: center;
    height: 36px;
    padding: 0 32px 0 12px;
    font-size: 18px;
    color: #e2f3e7;
    background-color: #217346;
}

.macro {
    margin-left: 33px;
}

.views {
    display: flex;
    align-self: stretch;
    margin-left: auto;
    margin-right: 5px;
}

.views button {
    width: 63px;
}

.views .on {
    background-color: #0a6332;
}

.status input {
    width: 166px;
    height: 24px;
    margin: 0 7px;
    appearance: none;
    background: linear-gradient(#e2f3e7, #e2f3e7) center / 100% 2px no-repeat;
}

.status input::-webkit-slider-thumb {
    appearance: none;
    width: 6px;
    height: 18px;
    background-color: #e2f3e7;
}

.percent {
    margin-left: 23px;
}
```
